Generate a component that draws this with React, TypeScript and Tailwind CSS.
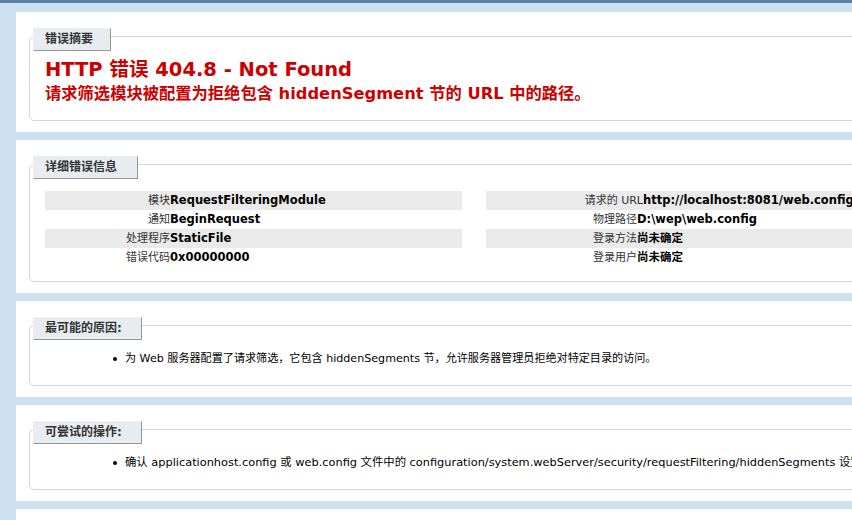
const font = "font-['DejaVu_Sans','Noto_Sans_CJK_SC',sans-serif]";

type Row = { label: string; value: string; wide?: boolean };

const leftRows: Row[] = [
  { label: '模块', value: 'RequestFilteringModule' },
  { label: '通知', value: 'BeginRequest' },
  { label: '处理程序', value: 'StaticFile' },
  { label: '错误代码', value: '0x00000000' },
];

const rightRows: Row[] = [
  { label: '请求的 URL', value: 'http://localhost:8081/web.config', wide: true },
  { label: '物理路径', value: 'D:\\wep\\web.config' },
  { label: '登录方法', value: '尚未确定' },
  { label: '登录用户', value: '尚未确定' },
];

function Legend({ text, width }: { text: string; width: string }) {
  return (
    <div
      className={`-mt-[9px] -ml-[12px] h-[23px] ${width} border border-t-[#EDEDED] border-l-[#EDEDED] border-r-[#969696] border-b-[#969696] bg-[#E7ECF0] pl-[11px] text-[12px] leading-[21px] font-bold text-[#333] whitespace-nowrap`}
    >
      {text}
    </div>
  );
}

function Panel({ children }: { children?: React.ReactNode }) {
  return <div className="mt-[8px] first:mt-0 w-[1249px] bg-white px-[13px] pt-[24px] pb-[11px]">{children}</div>;
}

function Fieldset({ children, pb }: { children: React.ReactNode; pb: string }) {
  return <div className={`rounded-[5px] border border-[#D6D6D6] px-[15px] ${pb}`}>{children}</div>;
}

function DetailTable({ rows, labelWidth, width }: { rows: Row[]; labelWidth: string; width: string }) {
  return (
    <div className={`${width} flex flex-col`}>
      {rows.map((r, i) => (
        <div key={r.label} className={`flex h-[19px] leading-[19px] whitespace-nowrap ${i % 2 === 0 ? 'bg-[#EAEAEA]' : ''}`}>
          <span className={`${r.wide ? 'w-[157px]' : labelWidth} shrink-0 text-right text-[11px] text-[#333]`}>{r.label}</span>
          <span className="text-[11.5px] font-bold text-black">{r.value}</span>
        </div>
      ))}
    </div>
  );
}

function Bullet({ children, size }: { children: React.ReactNode; size: string }) {
  return (
    <div className={`mt-[11px] flex items-center h-[15px] leading-[15px] whitespace-nowrap ${size} text-black`}>
      <span className="ml-[68px] mr-[8px] h-[4px] w-[4px] rounded-full bg-black" />
      <span>{children}</span>
    </div>
  );
}

export default function App() {
  return (
    <div className={`h-screen w-full overflow-hidden border-t-[3px] border-[#5F80A8] bg-[#CBE1EF] ${font}`}>
      <div className="pl-[16px] pt-[9px]">
        {/* 错误摘要 */}
        <Panel>
          <Fieldset pb="pb-[16px]">
            <Legend text="错误摘要" width="w-[78px]" />
            <h2 className="mt-[7px] text-[19.5px] leading-[24px] font-bold text-[#CC0000] whitespace-nowrap">
              HTTP 错误 404.8 - Not Found
            </h2>
            <h3 className="mt-[2px] text-[16.3px] leading-[20px] font-bold text-[#CC0000] whitespace-nowrap">
              请求筛选模块被配置为拒绝包含 hiddenSegment 节的 URL 中的路径。
            </h3>
          </Fieldset>
        </Panel>

        {/* 详细错误信息 */}
        <Panel>
          <Fieldset pb="pb-[14px]">
            <Legend text="详细错误信息" width="w-[105px]" />
            <div className="mt-[12px] flex gap-[24px]">
              <DetailTable rows={leftRows} labelWidth="w-[125px]" width="w-[417px]" />
              <DetailTable rows={rightRows} labelWidth="w-[151px]" width="w-[750px]" />
            </div>
          </Fieldset>
        </Panel>

        {/* 最可能的原因 */}
        <Panel>
          <Fieldset pb="pb-[19px]">
            <Legend text="最可能的原因:" width="w-[109px]" />
            <Bullet size="text-[11.1px]">为 Web 服务器配置了请求筛选，它包含 hiddenSegments 节，允许服务器管理员拒绝对特定目录的访问。</Bullet>
          </Fieldset>
        </Panel>

        {/* 可尝试的操作 */}
        <Panel>
          <Fieldset pb="pb-[19px]">
            <Legend text="可尝试的操作:" width="w-[109px]" />
            <Bullet size="text-[11.35px]">
              确认 applicationhost.config 或 web.config 文件中的 configuration/system.webServer/security/requestFiltering/hiddenSegments 设置。
            </Bullet>
          </Fieldset>
        </Panel>

        {/* next panel, only its top edge is in view */}
        <div className="mt-[8px] h-[80px] w-[1249px] bg-white" />
      </div>
    </div>
  );
}
